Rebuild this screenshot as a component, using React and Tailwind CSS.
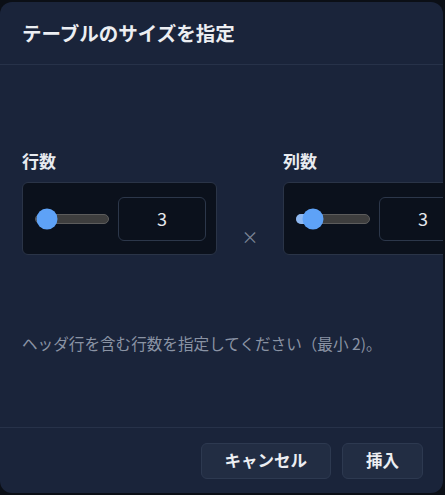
import React from "react";

const font = { fontFamily: '"Noto Sans CJK JP", "Noto Sans", sans-serif' };

function Slider({ pos, fill }) {
    // pos = thumb centre offset from the track's left edge, px
    return (
        <div className="relative w-[76px] h-[10px] rounded-full bg-[#3e3e3e] border border-[#5c5c5c]">
            {fill && (
                <div className="absolute left-[-1px] top-[-1px] h-[10px] w-[20px] rounded-full bg-[#8db8f2]" />
            )}
            <div
                className="absolute top-1/2 w-[21px] h-[21px] -translate-y-1/2 -translate-x-1/2 rounded-full bg-[#5ea2f7]"
                style={{ left: pos }}
            />
        </div>
    );
}

function SizeField({ label, value, pos, fill }) {
    return (
        <div className="flex flex-col gap-y-[10px] shrink-0">
            <p className="text-[17px] font-bold leading-[22px] text-[#e8ebf0]">{label}</p>
            <div className="w-[195px] h-[73px] shrink-0 flex flex-row items-center gap-x-[9px] pl-[12px] pr-[10px] bg-[#0b111c] border border-[#2a3447] rounded-md">
                <Slider pos={pos} fill={fill} />
                <div className="w-[88px] h-[44px] shrink-0 flex items-center justify-center border border-[#2c374a] rounded-md text-[18px] text-[#e6e8ec]">
                    {value}
                </div>
            </div>
        </div>
    );
}

export default function App() {
    return (
        <div className="w-[445px] h-[495px] bg-[#0b0f16] pt-[2px] overflow-hidden" style={font}>
            <div className="w-[443px] h-[491px] bg-[#1a243a] rounded-xl overflow-hidden flex flex-col">

                <div className="h-[63px] shrink-0 flex items-center px-[22px] border-b border-[#273249]">
                    <h2 className="text-[19.5px] font-bold text-[#eceef2] leading-none">テーブルのサイズを指定</h2>
                </div>

                <div className="flex-1 flex flex-col pl-[22px] pt-[85px]">
                    <div className="flex flex-row items-start">
                        <SizeField label="行数" value="3" pos={11} />
                        <div className="w-[66px] shrink-0 self-end pb-[6px] text-center text-[17px] text-[#7d8697]">×</div>
                        <SizeField label="列数" value="3" pos={16} fill />
                    </div>
                    <p className="mt-[77px] text-[15.6px] leading-[22px] text-[#8a93a4]">
                        ヘッダ行を含む行数を指定してください（最小 2)。
                    </p>
                </div>

                <div className="h-[66px] shrink-0 flex flex-row justify-end items-center gap-x-[11px] pr-[20px] border-t border-[#273249]">
                    <button className="h-[36px] px-[23px] bg-[#222d43] border border-[#2d3950] rounded-md text-[16.5px] font-bold text-[#eceef2]">
                        キャンセル
                    </button>
                    <button className="h-[36px] px-[23px] bg-[#222d43] border border-[#2d3950] rounded-md text-[16.5px] font-bold text-[#eceef2]">
                        挿入
                    </button>
                </div>

            </div>
        </div>
    );
}
